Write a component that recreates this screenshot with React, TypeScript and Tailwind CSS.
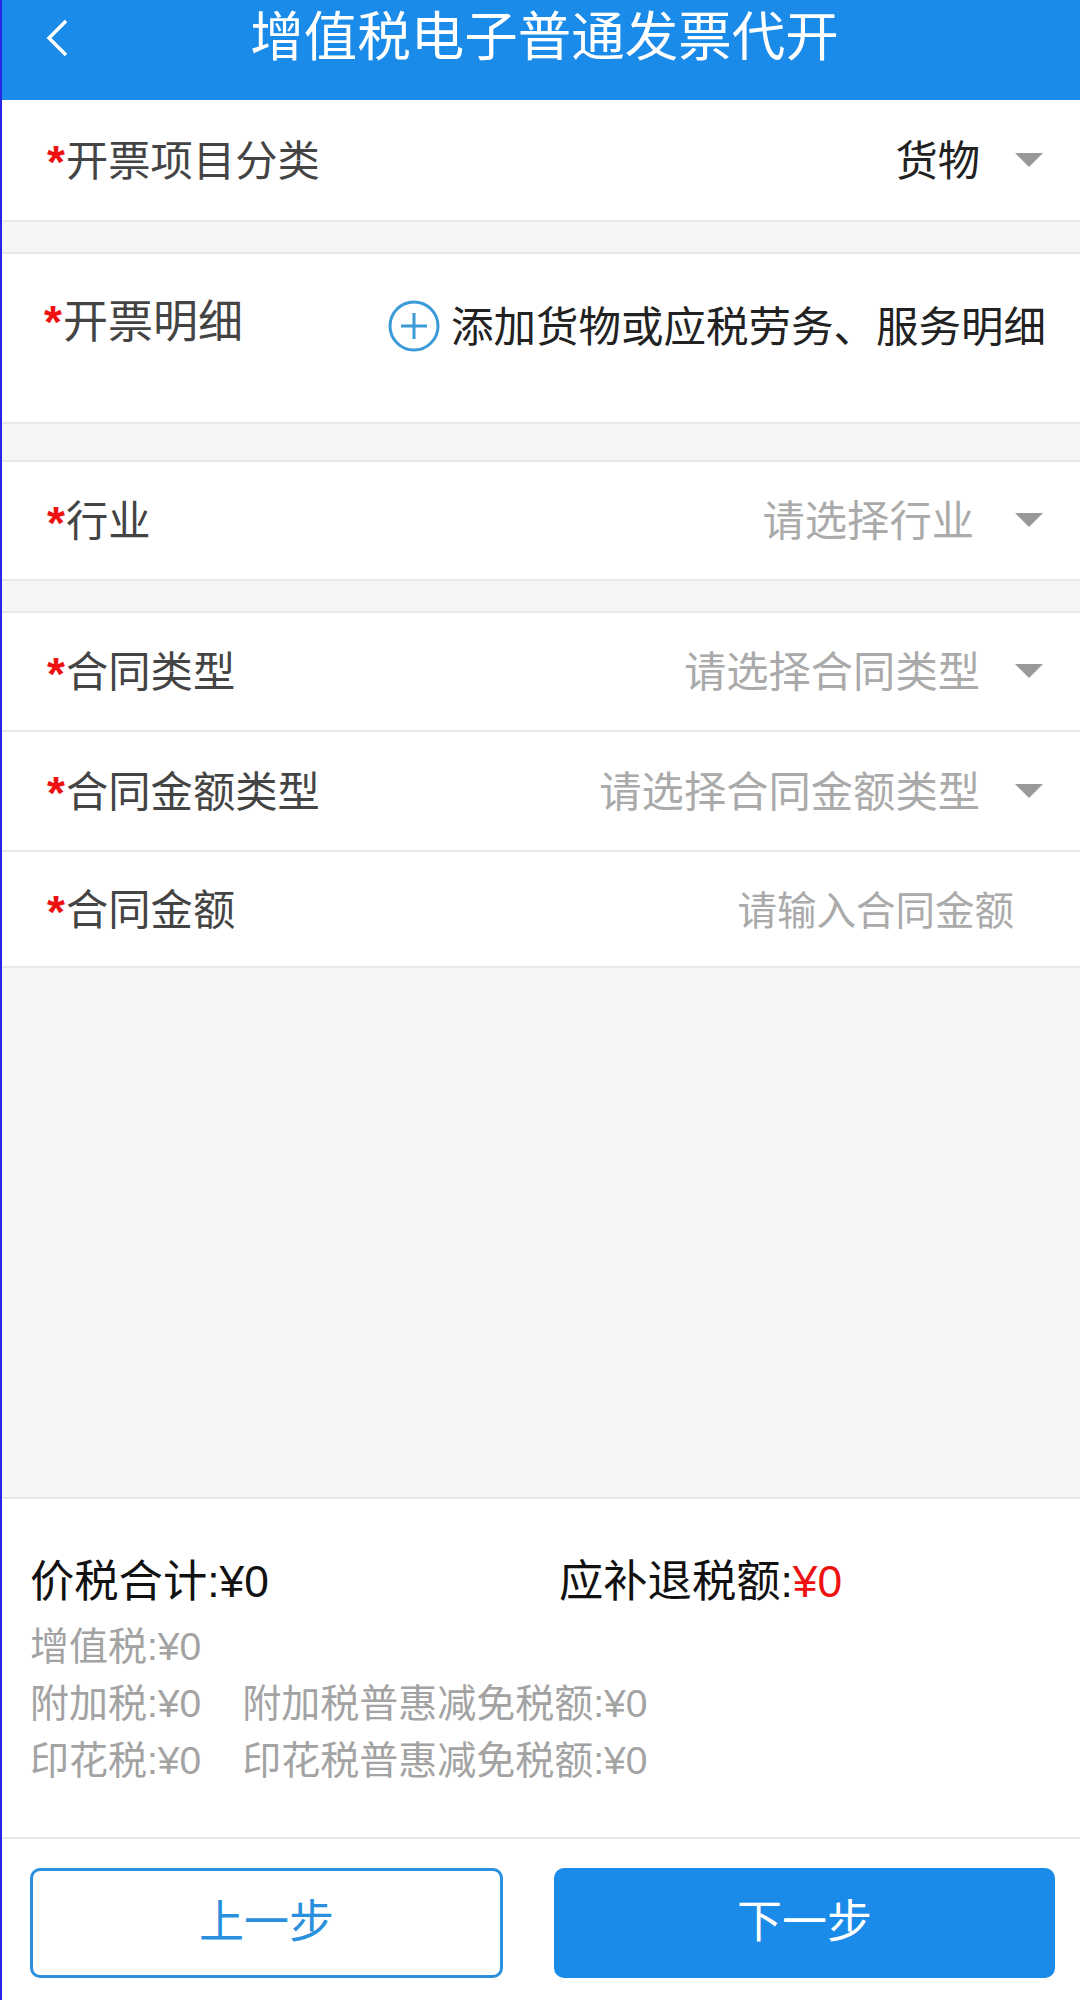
const font = { fontFamily: '"Liberation Sans", "Noto Sans CJK SC", sans-serif' };

function Caret() {
  return (
    <svg width="28" height="14" viewBox="0 0 28 14" className="shrink-0">
      <path d="M0 0H28L14 14Z" fill="#999999" />
    </svg>
  );
}

function Label({ text, size = "text-[42.3px]", pl = "pl-[45px]" }: { text: string; size?: string; pl?: string }) {
  return (
    <div className={`flex items-center leading-none text-[#444444] ${size} ${pl}`}>
      <span className="w-[19px] text-[46px] font-bold text-[#ee1111]">*</span>
      <span>{text}</span>
    </div>
  );
}

function SelectRow({ label, value, dark, gap, h }: { label: string; value: string; dark?: boolean; gap: string; h: string }) {
  return (
    <div className={`flex items-center justify-between bg-white pr-[37px] ${h}`}>
      <div className="pt-[4px]">
        <Label text={label} />
      </div>
      <div className={`flex items-center ${gap}`}>
        <span className={`pt-[4px] text-[42.3px] leading-none ${dark ? "text-[#222222]" : "text-[#aaaaaa]"}`}>{value}</span>
        <Caret />
      </div>
    </div>
  );
}

export default function App() {
  return (
    <div style={font} className="flex h-[2000px] w-[1080px] flex-col overflow-hidden border-l-2 border-[#2626e6] bg-[#f6f6f6]">
      <header className="relative flex h-[100px] shrink-0 items-start justify-center bg-[#1a8be8] pl-[7px] pt-[9px] text-white">
        <svg width="24" height="40" viewBox="0 0 24 40" className="absolute left-[43px] top-[18px]" fill="none" stroke="#ffffff" strokeWidth="3.5">
          <path d="M21 3L4 20L21 37" />
        </svg>
        <h1 className="text-[53.5px] font-normal leading-[58px]">增值税电子普通发票代开</h1>
      </header>

      <SelectRow label="开票项目分类" value="货物" dark gap="gap-[35px]" h="h-[122px] border-b-2 border-[#e8e8e8]" />

      <div className="mt-[30px] flex h-[172px] items-start justify-between border-y-2 border-[#e8e8e8] bg-white pr-[34px]">
        <div className="pt-[45px]">
          <Label text="开票明细" size="text-[45px]" pl="pl-[42px]" />
        </div>
        <div className="flex items-center gap-[11px] pt-[46px]">
          <svg width="52" height="52" viewBox="0 0 52 52" fill="none" stroke="#3a9bd8" strokeWidth="3">
            <circle cx="26" cy="26" r="24" />
            <path d="M13 26H39M26 13V39" />
          </svg>
          <span className="pt-[4px] text-[42.5px] leading-none text-[#222222]">添加货物或应税劳务、服务明细</span>
        </div>
      </div>

      <div className="mt-[36px] border-t-2 border-[#e8e8e8]">
        <SelectRow label="行业" value="请选择行业" gap="gap-[41px]" h="h-[119px] border-b-2 border-[#e8e8e8]" />
      </div>

      <div className="mt-[30px] border-t-2 border-[#e8e8e8]">
        <SelectRow label="合同类型" value="请选择合同类型" gap="gap-[35px]" h="h-[119px] border-b-2 border-[#e8e8e8]" />
        <SelectRow label="合同金额类型" value="请选择合同金额类型" gap="gap-[35px]" h="h-[120px] border-b-2 border-[#e8e8e8]" />
        <div className="flex h-[116px] items-center justify-between border-b-2 border-[#e8e8e8] bg-white pr-[66px]">
          <div className="pt-[5px]">
            <Label text="合同金额" />
          </div>
          <span className="pt-[5px] text-[39.5px] leading-none text-[#aaaaaa]">请输入合同金额</span>
        </div>
      </div>

      <div className="flex-1" />

      <section className="h-[340px] shrink-0 border-t-2 border-[#e8e8e8] bg-white pl-[28px] pt-[58px]">
        <div className="flex text-[44.3px] leading-[50px] text-[#111111]">
          <div className="w-[529px]">价税合计:¥0</div>
          <div>
            应补退税额:<span className="text-[#ee1111]">¥0</span>
          </div>
        </div>
        <div className="mt-[11px] text-[39px] leading-[57px] text-[#a3a3a3]">
          <div>增值税:¥0</div>
          <div className="flex gap-[41px]">
            <span>附加税:¥0</span>
            <span>附加税普惠减免税额:¥0</span>
          </div>
          <div className="flex gap-[41px]">
            <span>印花税:¥0</span>
            <span>印花税普惠减免税额:¥0</span>
          </div>
        </div>
      </section>

      <footer className="flex h-[163px] shrink-0 gap-[51px] border-t-2 border-[#e8e8e8] bg-white pl-[28px] pt-[29px]">
        <button className="flex h-[110px] w-[473px] items-center justify-center rounded-[10px] border-[3px] border-[#2a8fdc] bg-white text-[45px] text-[#2a8fdc]">上一步</button>
        <button className="flex h-[110px] w-[501px] items-center justify-center rounded-[10px] bg-[#1a8be8] text-[45px] text-white">下一步</button>
      </footer>
    </div>
  );
}
